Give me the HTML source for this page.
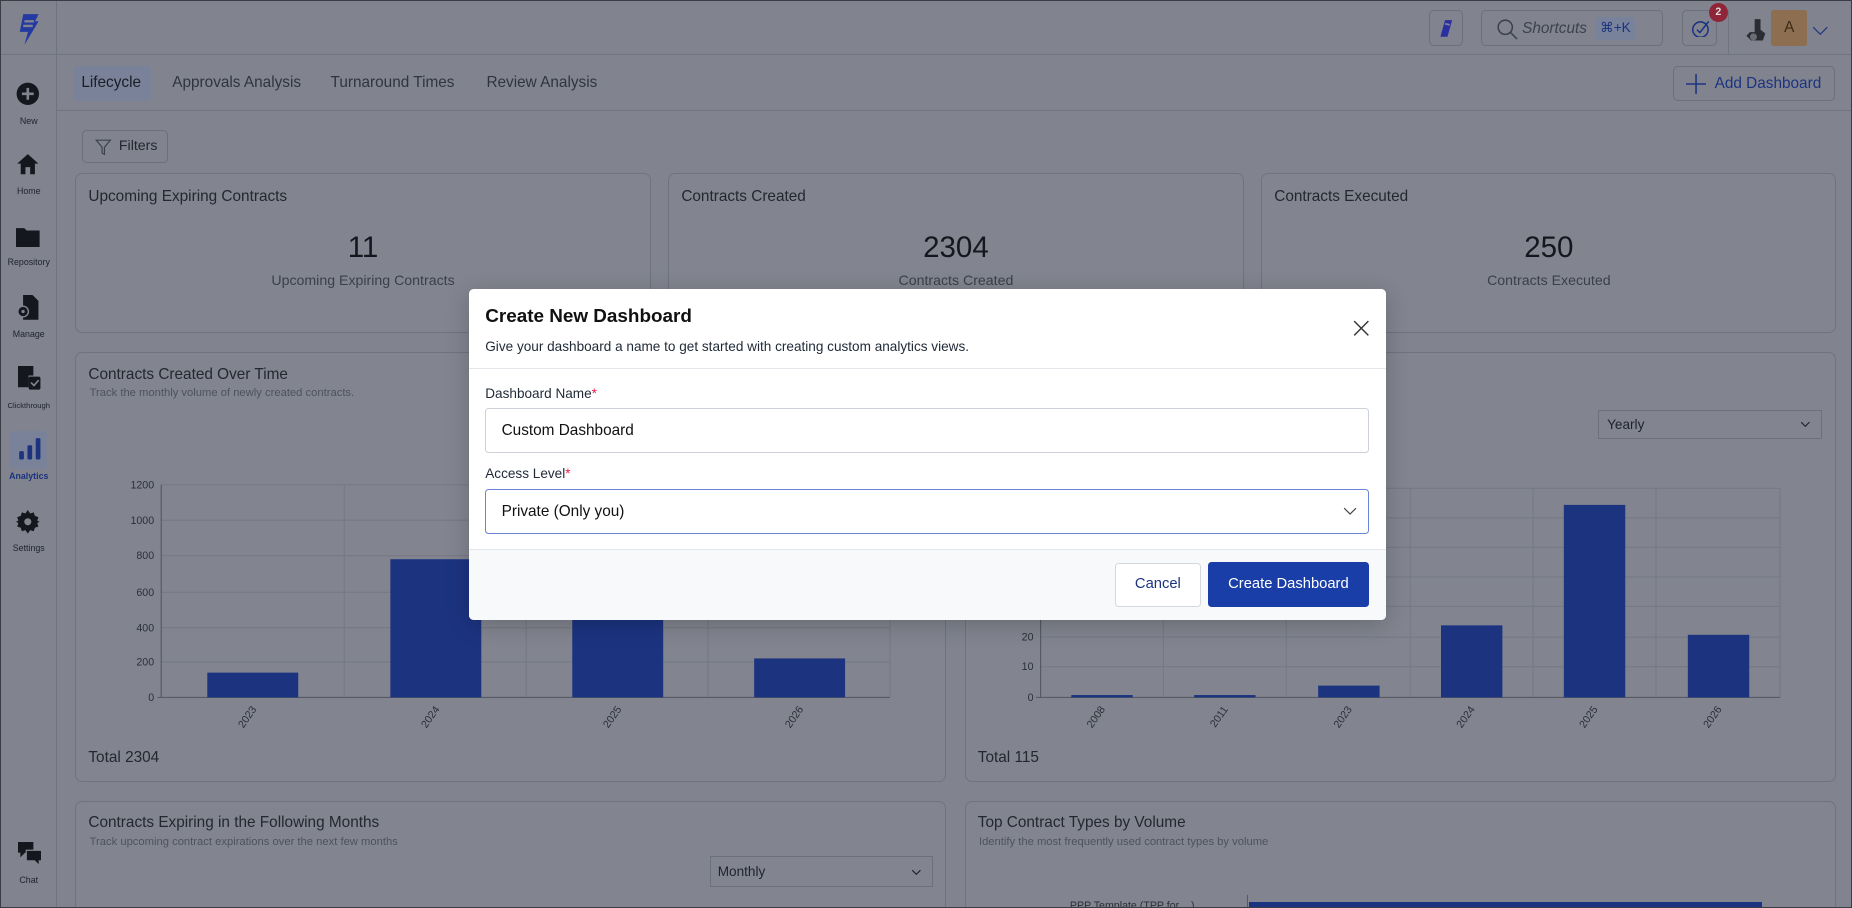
<!DOCTYPE html>
<html><head><meta charset="utf-8">
<style>
*{box-sizing:border-box;margin:0;padding:0}
html,body{width:1852px;height:908px;overflow:hidden;background:#81848f}
#root{zoom:1.18112;width:1568px;height:769px;position:relative;background:#81848f;font-family:"Liberation Sans",sans-serif;color:#1e222b;overflow:hidden;border:1px solid #3a3d44}
.abs{position:absolute}
.side{left:0;top:0;width:47px;height:769px;border-right:1px solid #70747e}
.nav{position:absolute;left:0;width:47px;text-align:center;font-size:7.5px;color:#1e222b}
.top{left:47px;top:0;right:0;height:46px;border-bottom:1px solid #70747e}
.tabs{left:47px;top:46px;right:0;height:47px;border-bottom:1px solid #70747e}
.tab{position:absolute;top:62px;font-size:13px;color:#2f343d}
.card{position:absolute;border:1px solid #6f737d;border-radius:6px;background:#82858f}
.ct{position:absolute;font-size:13px;color:#23272f}
.cs{position:absolute;font-size:9.5px;color:#4d525c}
.big{position:absolute;font-size:25px;color:#14171d;text-align:center}
.sub{position:absolute;font-size:12px;color:#3a3f48;text-align:center}
.btn{position:absolute;border:1px solid #6c707a;border-radius:4px}
.modal{position:absolute;left:396px;top:244px;width:777px;height:280px;background:#fff;border-radius:4px;overflow:hidden;box-shadow:0 4px 20px rgba(0,0,0,.2)}
.lbl{position:absolute;font-size:11.5px;color:#1f2937}
.lbl b{color:#e11d48;font-weight:normal}
.inp{position:absolute;left:14px;width:748px;height:38px;border:1px solid #ccd1d9;border-radius:3px;font-size:13px;color:#111;padding:11px 13px}
</style></head><body><div id="root">

<!-- sidebar -->
<div class="abs side">
 <svg class="abs" style="left:12px;top:10px" width="22" height="28" viewBox="0 0 22 28"><path d="M7 1h13l-3 6 3 0-12 20 3-11H4z" fill="#243aa0"/><path d="M8 7h8M7 11h8" stroke="#81848f" stroke-width="2"/></svg>
 <div class="abs" style="left:0;top:45px;width:47px;border-top:1px solid #70747e"></div>
 <svg class="abs" style="left:13px;top:69px" width="20" height="20"><circle cx="10" cy="10" r="9.5" fill="#14171d"/><path d="M10 5v10M5 10h10" stroke="#81848f" stroke-width="2.2"/></svg>
 <div class="nav" style="top:97px">New</div>
 <svg class="abs" style="left:13px;top:129px" width="20" height="19"><path d="M10 1 1 9h3v9h4v-6h4v6h4V9h3z" fill="#14171d"/></svg>
 <div class="nav" style="top:157px">Home</div>
 <svg class="abs" style="left:13px;top:191px" width="20" height="17"><path d="M0 1h7l2 2h11v14H0z" fill="#14171d"/></svg>
 <div class="nav" style="top:217px">Repository</div>
 <svg class="abs" style="left:13px;top:249px" width="20" height="21"><path d="M6 0h8l5 5v16H6z" fill="#14171d"/><circle cx="6" cy="14" r="4.5" fill="#14171d" stroke="#81848f" stroke-width="1.2"/><circle cx="6" cy="14" r="1.4" fill="#81848f"/></svg>
 <div class="nav" style="top:278px">Manage</div>
 <svg class="abs" style="left:14px;top:309px" width="20" height="21"><path d="M0 0h13v8H9v10H0z" fill="#14171d"/><rect x="9" y="9" width="10" height="11" rx="1.5" fill="#14171d"/><path d="M11 14l2.5 2.5 4-4.5" stroke="#81848f" stroke-width="1.4" fill="none"/></svg>
 <div class="nav" style="top:339px;font-size:6.5px">Clickthrough</div>
 <div class="abs" style="left:8px;top:364px;width:31px;height:32px;background:#7a8299;border-radius:2px"></div>
 <svg class="abs" style="left:14px;top:369px" width="20" height="20"><rect x="1" y="12" width="4" height="7" rx="1" fill="#1c3380"/><rect x="8" y="7" width="4" height="12" rx="1" fill="#1c3380"/><rect x="15" y="1" width="4" height="18" rx="1" fill="#1c3380"/></svg>
 <div class="nav" style="top:398px;color:#1c3380;font-weight:bold">Analytics</div>
 <svg class="abs" style="left:13px;top:431px" width="20" height="20" viewBox="0 0 20 20"><path d="M10 0l2 3 3-1 1 3 3 1-1 3 2 1-2 1 1 3-3 1-1 3-3-1-2 3-2-3-3 1-1-3-3-1 1-3-2-1 2-1-1-3 3-1 1-3 3 1z" fill="#14171d"/><circle cx="10" cy="10" r="3" fill="#81848f"/></svg>
 <div class="nav" style="top:459px">Settings</div>
 <svg class="abs" style="left:14px;top:712px" width="20" height="20"><path d="M0 0h13v9H6l-4 4V9H0z" fill="#14171d"/><path d="M7 7h13v9h-2v4l-4-4H7z" fill="#14171d" stroke="#81848f" stroke-width="1"/></svg>
 <div class="nav" style="top:740px">Chat</div>
</div>

<!-- top bar -->
<div class="abs top"></div>
<div class="btn" style="left:1209px;top:8px;width:29px;height:30px"><svg style="position:absolute;left:7px;top:6px" width="14" height="16"><path d="M6 1h6L8 15H2z" fill="#2b2fa0"/><path d="M6 4l4 1" stroke="#81848f" stroke-width="1.5"/></svg></div>
<div class="btn" style="left:1253px;top:8px;width:154px;height:30px">
 <svg style="position:absolute;left:13px;top:6px" width="18" height="18"><circle cx="7" cy="7" r="6" stroke="#3c414c" stroke-width="1.3" fill="none"/><path d="M11.5 11.5 17 17" stroke="#3c414c" stroke-width="1.3"/></svg>
 <span style="position:absolute;left:34px;top:7px;font-size:13px;font-style:italic;color:#3c414c">Shortcuts</span>
 <span style="position:absolute;left:128px;top:5px;width:34px;height:19px;margin-left:-32px;background:#78829a;border-radius:3px;font-size:11.5px;color:#1c3380;text-align:center;line-height:19px">⌘+K</span>
</div>
<div class="btn" style="left:1423px;top:8px;width:30px;height:30px"><svg style="position:absolute;left:7px;top:6px" width="16" height="16"><circle cx="8" cy="9" r="6.5" stroke="#1c3380" stroke-width="1.3" fill="none"/><path d="M5 9l2.5 2.5L15 2" stroke="#1c3380" stroke-width="1.3" fill="none"/></svg></div>
<div class="abs" style="left:1446px;top:2px;width:16px;height:16px;border-radius:50%;background:#8f2538;color:#ddd;font-size:9px;text-align:center;line-height:16px;font-weight:bold">2</div>
<div class="abs" style="left:1462px;top:8px;width:1px;height:38px;background:#70747e"></div>
<svg class="abs" style="left:1476px;top:14px" width="20" height="22"><path d="M9 1h5v9l4 3-2 6H6l-4-4 3-3h4z" fill="#2a2d33"/><circle cx="8" cy="16" r="3" fill="#6a6d74"/></svg>
<div class="abs" style="left:1499px;top:8px;width:30px;height:30px;background:#8e6e50;border-radius:2px;color:#3d2b1a;font-size:13px;text-align:center;line-height:30px">A</div>
<svg class="abs" style="left:1533px;top:21px" width="14" height="8"><path d="M1 1l6 6 6-6" stroke="#1c3380" fill="none"/></svg>

<!-- tabs -->
<div class="abs tabs"></div>
<div class="abs" style="left:61px;top:55px;width:66px;height:30px;background:#7a8299;border-radius:3px"></div>
<div class="tab" style="left:68px;color:#1a1e26">Lifecycle</div>
<div class="tab" style="left:145px">Approvals Analysis</div>
<div class="tab" style="left:279px">Turnaround Times</div>
<div class="tab" style="left:411px">Review Analysis</div>
<div class="btn" style="left:1416px;top:55px;width:137px;height:30px"><svg style="position:absolute;left:10px;top:6px" width="17" height="17"><path d="M8.5 0v17M0 8.5h17" stroke="#1c3380" stroke-width="1.3"/></svg><span style="position:absolute;left:34px;top:7px;font-size:13px;color:#1c3380">Add Dashboard</span></div>

<div class="btn" style="left:69px;top:109px;width:72px;height:28px"><svg style="position:absolute;left:10px;top:7px" width="14" height="14"><path d="M1 1h12L8 7v6L6 12V7z" stroke="#3c414c" fill="none"/></svg><span style="position:absolute;left:30px;top:6px;font-size:12px;color:#23272f">Filters</span></div>

<!-- stat cards -->
<div class="card" style="left:63px;top:146px;width:487px;height:135px"></div>
<div class="ct" style="left:74px;top:158px">Upcoming Expiring Contracts</div>
<div class="big" style="left:63px;top:195px;width:487px">11</div>
<div class="sub" style="left:63px;top:230px;width:487px">Upcoming Expiring Contracts</div>
<div class="card" style="left:565px;top:146px;width:487px;height:135px"></div>
<div class="ct" style="left:576px;top:158px">Contracts Created</div>
<div class="big" style="left:565px;top:195px;width:487px">2304</div>
<div class="sub" style="left:565px;top:230px;width:487px">Contracts Created</div>
<div class="card" style="left:1067px;top:146px;width:487px;height:135px"></div>
<div class="ct" style="left:1078px;top:158px">Contracts Executed</div>
<div class="big" style="left:1067px;top:195px;width:487px">250</div>
<div class="sub" style="left:1067px;top:230px;width:487px">Contracts Executed</div>

<!-- chart cards -->
<div class="card" style="left:63px;top:297px;width:737px;height:364px"></div>
<div class="ct" style="left:74px;top:309px">Contracts Created Over Time</div>
<div class="cs" style="left:75px;top:327px">Track the monthly volume of newly created contracts.</div>
<svg class="abs" style="left:63px;top:400px" width="737" height="220" font-family="Liberation Sans" font-size="9" fill="#2b2f37">
 <g stroke="#767a85" stroke-width="1">
  <line x1="73" y1="10" x2="690" y2="10"/><line x1="73" y1="40" x2="690" y2="40"/><line x1="73" y1="70" x2="690" y2="70"/><line x1="73" y1="101" x2="690" y2="101"/><line x1="73" y1="131" x2="690" y2="131"/><line x1="73" y1="160" x2="690" y2="160"/>
  <line x1="228" y1="10" x2="228" y2="190"/><line x1="382" y1="10" x2="382" y2="190"/><line x1="536" y1="10" x2="536" y2="190"/><line x1="690" y1="10" x2="690" y2="190"/>
 </g>
 <line x1="73" y1="10" x2="73" y2="190" stroke="#555a64"/><line x1="70" y1="190" x2="690" y2="190" stroke="#555a64"/>
 <g text-anchor="end"><text x="67" y="13">1200</text><text x="67" y="43">1000</text><text x="67" y="73">800</text><text x="67" y="104">600</text><text x="67" y="134">400</text><text x="67" y="163">200</text><text x="67" y="193">0</text></g>
 <g fill="#1c3380"><rect x="112" y="169" width="77" height="21"/><rect x="267" y="73" width="77" height="117"/><rect x="421" y="55" width="77" height="135"/><rect x="575" y="157" width="77" height="33"/></g>
 <g text-anchor="end"><text transform="translate(154,200) rotate(-55)">2023</text><text transform="translate(309,200) rotate(-55)">2024</text><text transform="translate(463,200) rotate(-55)">2025</text><text transform="translate(617,200) rotate(-55)">2026</text></g>
</svg>
<div class="ct" style="left:74px;top:633px">Total 2304</div>

<div class="card" style="left:816px;top:297px;width:738px;height:364px"></div>
<div class="abs" style="left:1352px;top:346px;width:190px;height:25px;border:1px solid #6c707a;font-size:11.5px;padding:5px 7px">Yearly<svg style="position:absolute;right:9px;top:9px" width="9" height="6"><path d="M1 1l3.5 3.5L8 1" stroke="#23272f" fill="none"/></svg></div>
<svg class="abs" style="left:816px;top:400px" width="738" height="220" font-family="Liberation Sans" font-size="9" fill="#2b2f37">
 <g stroke="#767a85"><line x1="64" y1="13" x2="690" y2="13"/><line x1="64" y1="38" x2="690" y2="38"/><line x1="64" y1="63" x2="690" y2="63"/><line x1="64" y1="88" x2="690" y2="88"/><line x1="64" y1="113" x2="690" y2="113"/><line x1="64" y1="139" x2="690" y2="139"/><line x1="64" y1="164" x2="690" y2="164"/>
 <line x1="168" y1="13" x2="168" y2="190"/><line x1="272" y1="13" x2="272" y2="190"/><line x1="377" y1="13" x2="377" y2="190"/><line x1="481" y1="13" x2="481" y2="190"/><line x1="585" y1="13" x2="585" y2="190"/><line x1="690" y1="13" x2="690" y2="190"/></g>
 <line x1="64" y1="13" x2="64" y2="190" stroke="#555a64"/><line x1="60" y1="190" x2="690" y2="190" stroke="#555a64"/>
 <g text-anchor="end"><text x="58" y="142">20</text><text x="58" y="167">10</text><text x="58" y="193">0</text></g>
 <g fill="#1c3380"><rect x="90" y="188" width="52" height="2"/><rect x="194" y="188" width="52" height="2"/><rect x="299" y="180" width="52" height="10"/><rect x="403" y="129" width="52" height="61"/><rect x="507" y="27" width="52" height="163"/><rect x="612" y="137" width="52" height="53"/></g>
 <g text-anchor="end"><text transform="translate(119,200) rotate(-55)">2008</text><text transform="translate(223,200) rotate(-55)">2011</text><text transform="translate(328,200) rotate(-55)">2023</text><text transform="translate(432,200) rotate(-55)">2024</text><text transform="translate(536,200) rotate(-55)">2025</text><text transform="translate(641,200) rotate(-55)">2026</text></g>
</svg>
<div class="ct" style="left:827px;top:633px">Total 115</div>

<!-- bottom cards -->
<div class="card" style="left:63px;top:677px;width:737px;height:110px"></div>
<div class="ct" style="left:74px;top:688px">Contracts Expiring in the Following Months</div>
<div class="cs" style="left:75px;top:707px">Track upcoming contract expirations over the next few months</div>
<div class="abs" style="left:600px;top:724px;width:189px;height:26px;border:1px solid #6c707a;font-size:11.5px;padding:6px 6px">Monthly<svg style="position:absolute;right:9px;top:10px" width="9" height="6"><path d="M1 1l3.5 3.5L8 1" stroke="#23272f" fill="none"/></svg></div>
<div class="card" style="left:816px;top:677px;width:738px;height:110px"></div>
<div class="ct" style="left:827px;top:688px">Top Contract Types by Volume</div>
<div class="cs" style="left:828px;top:707px">Identify the most frequently used contract types by volume</div>
<div class="abs" style="left:1055px;top:757px;width:1px;height:12px;background:#555a64"></div>
<div class="abs" style="left:1057px;top:763px;width:434px;height:6px;background:#1c3380"></div>
<div class="abs" style="left:905px;top:761px;font-size:9px;color:#2b2f37">PPP Template (TPP for ...)</div>

<!-- modal -->
<div class="modal">
 <div class="abs" style="left:14px;top:14px;font-size:16px;font-weight:bold;color:#111">Create New Dashboard</div>
 <svg class="abs" style="left:749px;top:26px" width="14" height="14"><path d="M1 1l12 12M13 1 1 13" stroke="#333" stroke-width="1.2"/></svg>
 <div class="abs" style="left:14px;top:42px;font-size:11.5px;color:#1f2937">Give your dashboard a name to get started with creating custom analytics views.</div>
 <div class="abs" style="left:0;top:67px;width:777px;height:1px;background:#e3e6ea"></div>
 <div class="lbl" style="left:14px;top:82px">Dashboard Name<b>*</b></div>
 <div class="inp" style="top:101px">Custom Dashboard</div>
 <div class="lbl" style="left:14px;top:150px">Access Level<b>*</b></div>
 <div class="inp" style="top:169px;border-color:#6b85d6">Private (Only you)<svg style="position:absolute;right:9px;top:15px" width="12" height="8"><path d="M1 1l5 5 5-5" stroke="#444" fill="none"/></svg></div>
 <div class="abs" style="left:0;top:220px;width:777px;height:60px;background:#f8f9fb;border-top:1px solid #e3e6ea"></div>
 <div class="abs" style="left:547px;top:232px;width:73px;height:37px;border:1px solid #d4d8de;border-radius:3px;background:#fff;font-size:12.5px;color:#1c3380;text-align:center;line-height:35px">Cancel</div>
 <div class="abs" style="left:626px;top:231px;width:136px;height:38px;background:#1a3ea8;border-radius:3px;font-size:12.5px;color:#fff;text-align:center;line-height:38px">Create Dashboard</div>
</div>

</div></body></html>
